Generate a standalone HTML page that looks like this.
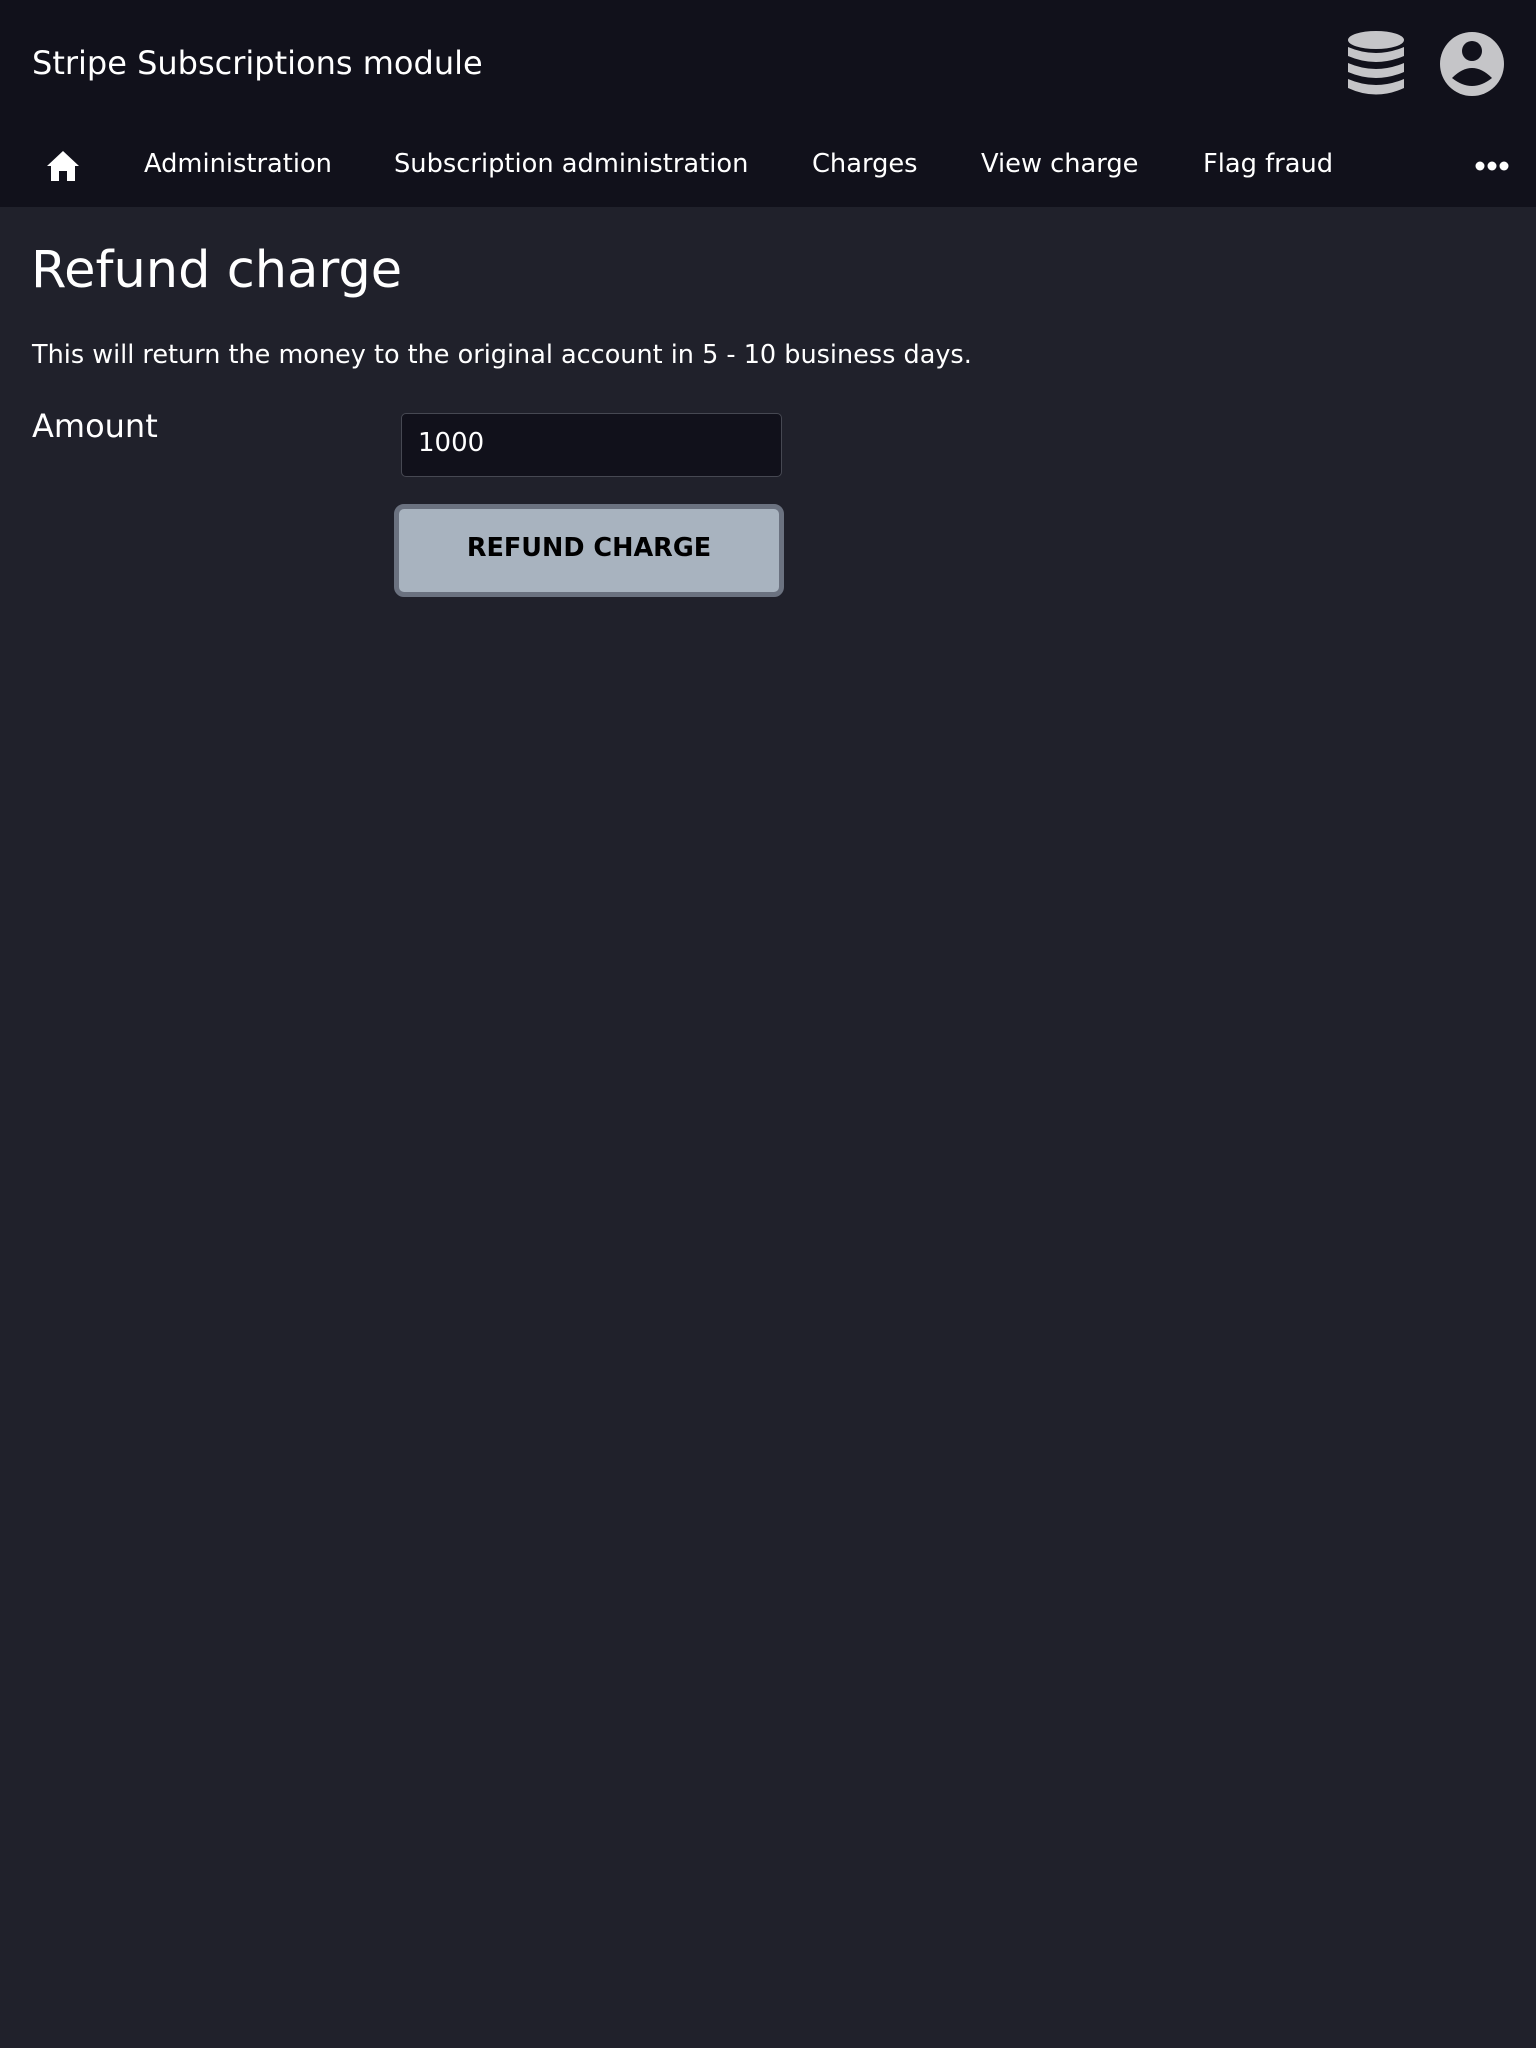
<!DOCTYPE html>
<html><head><meta charset="utf-8"><style>
body{margin:0;width:1536px;height:2048px;background:#20212b;font-family:"DejaVu Sans","Liberation Sans",sans-serif;color:#fff;position:relative;overflow:hidden}
.hdr{position:absolute;left:0;top:0;width:1536px;height:207px;background:#11111b}
.a{position:absolute;white-space:nowrap}
.nav{font-size:25.7px;top:149px}
</style></head><body>
<div class="hdr"></div>
<div class="a" style="left:32px;top:44px;font-size:32px">Stripe Subscriptions module</div>
<svg class="a" style="left:1348px;top:31px" width="56" height="66" viewBox="0 0 56 66">
<g fill="#c5c5c8"><ellipse cx="28" cy="9" rx="28" ry="9"/>
<path d="M0 16 Q28 28 56 16 V25 Q28 37 0 25Z"/>
<path d="M0 32 Q28 44 56 32 V41 Q28 53 0 41Z"/>
<path d="M0 48 Q28 60 56 48 V57 Q28 70 0 57Z"/></g></svg>
<svg class="a" style="left:1440px;top:32px" width="64" height="64" viewBox="0 0 64 64">
<circle cx="32" cy="32" r="32" fill="#c5c5c8"/><circle cx="32" cy="19" r="10" fill="#11111b"/>
<path d="M12 46 Q32 26 52 46 Q32 62 12 46Z" fill="#11111b"/></svg>
<svg class="a" style="left:47px;top:151px" width="32" height="30" viewBox="0 0 32 30"><path d="M16 0 L32 15 H28 V30 H20 V20 H12 V30 H4 V15 H0Z" fill="#fff"/></svg>
<div class="a nav" style="left:144px">Administration</div>
<div class="a nav" style="left:394px">Subscription administration</div>
<div class="a nav" style="left:812px">Charges</div>
<div class="a nav" style="left:981px">View charge</div>
<div class="a nav" style="left:1203px">Flag fraud</div>
<svg class="a" style="left:1475px;top:161px" width="34" height="10"><circle cx="5" cy="5" r="4.5" fill="#fff"/><circle cx="17" cy="5" r="4.5" fill="#fff"/><circle cx="29" cy="5" r="4.5" fill="#fff"/></svg>
<div class="a" style="left:31px;top:241px;font-size:51px">Refund charge</div>
<div class="a" style="left:32px;top:340px;font-size:25.5px">This will return the money to the original account in 5 - 10 business days.</div>
<div class="a" style="left:32px;top:407px;font-size:32px">Amount</div>
<div class="a" style="left:401px;top:413px;width:379px;height:62px;background:#11111b;border:1px solid #464852;border-radius:5px"></div>
<div class="a" style="left:418px;top:428px;font-size:26px">1000</div>
<div class="a" style="left:394px;top:504px;width:380px;height:83px;background:#a8b3bf;border:5px solid #6b7280;border-radius:10px;color:#000;font-weight:bold;font-size:25.5px;text-align:center;line-height:78px">REFUND CHARGE</div>
</body></html>
